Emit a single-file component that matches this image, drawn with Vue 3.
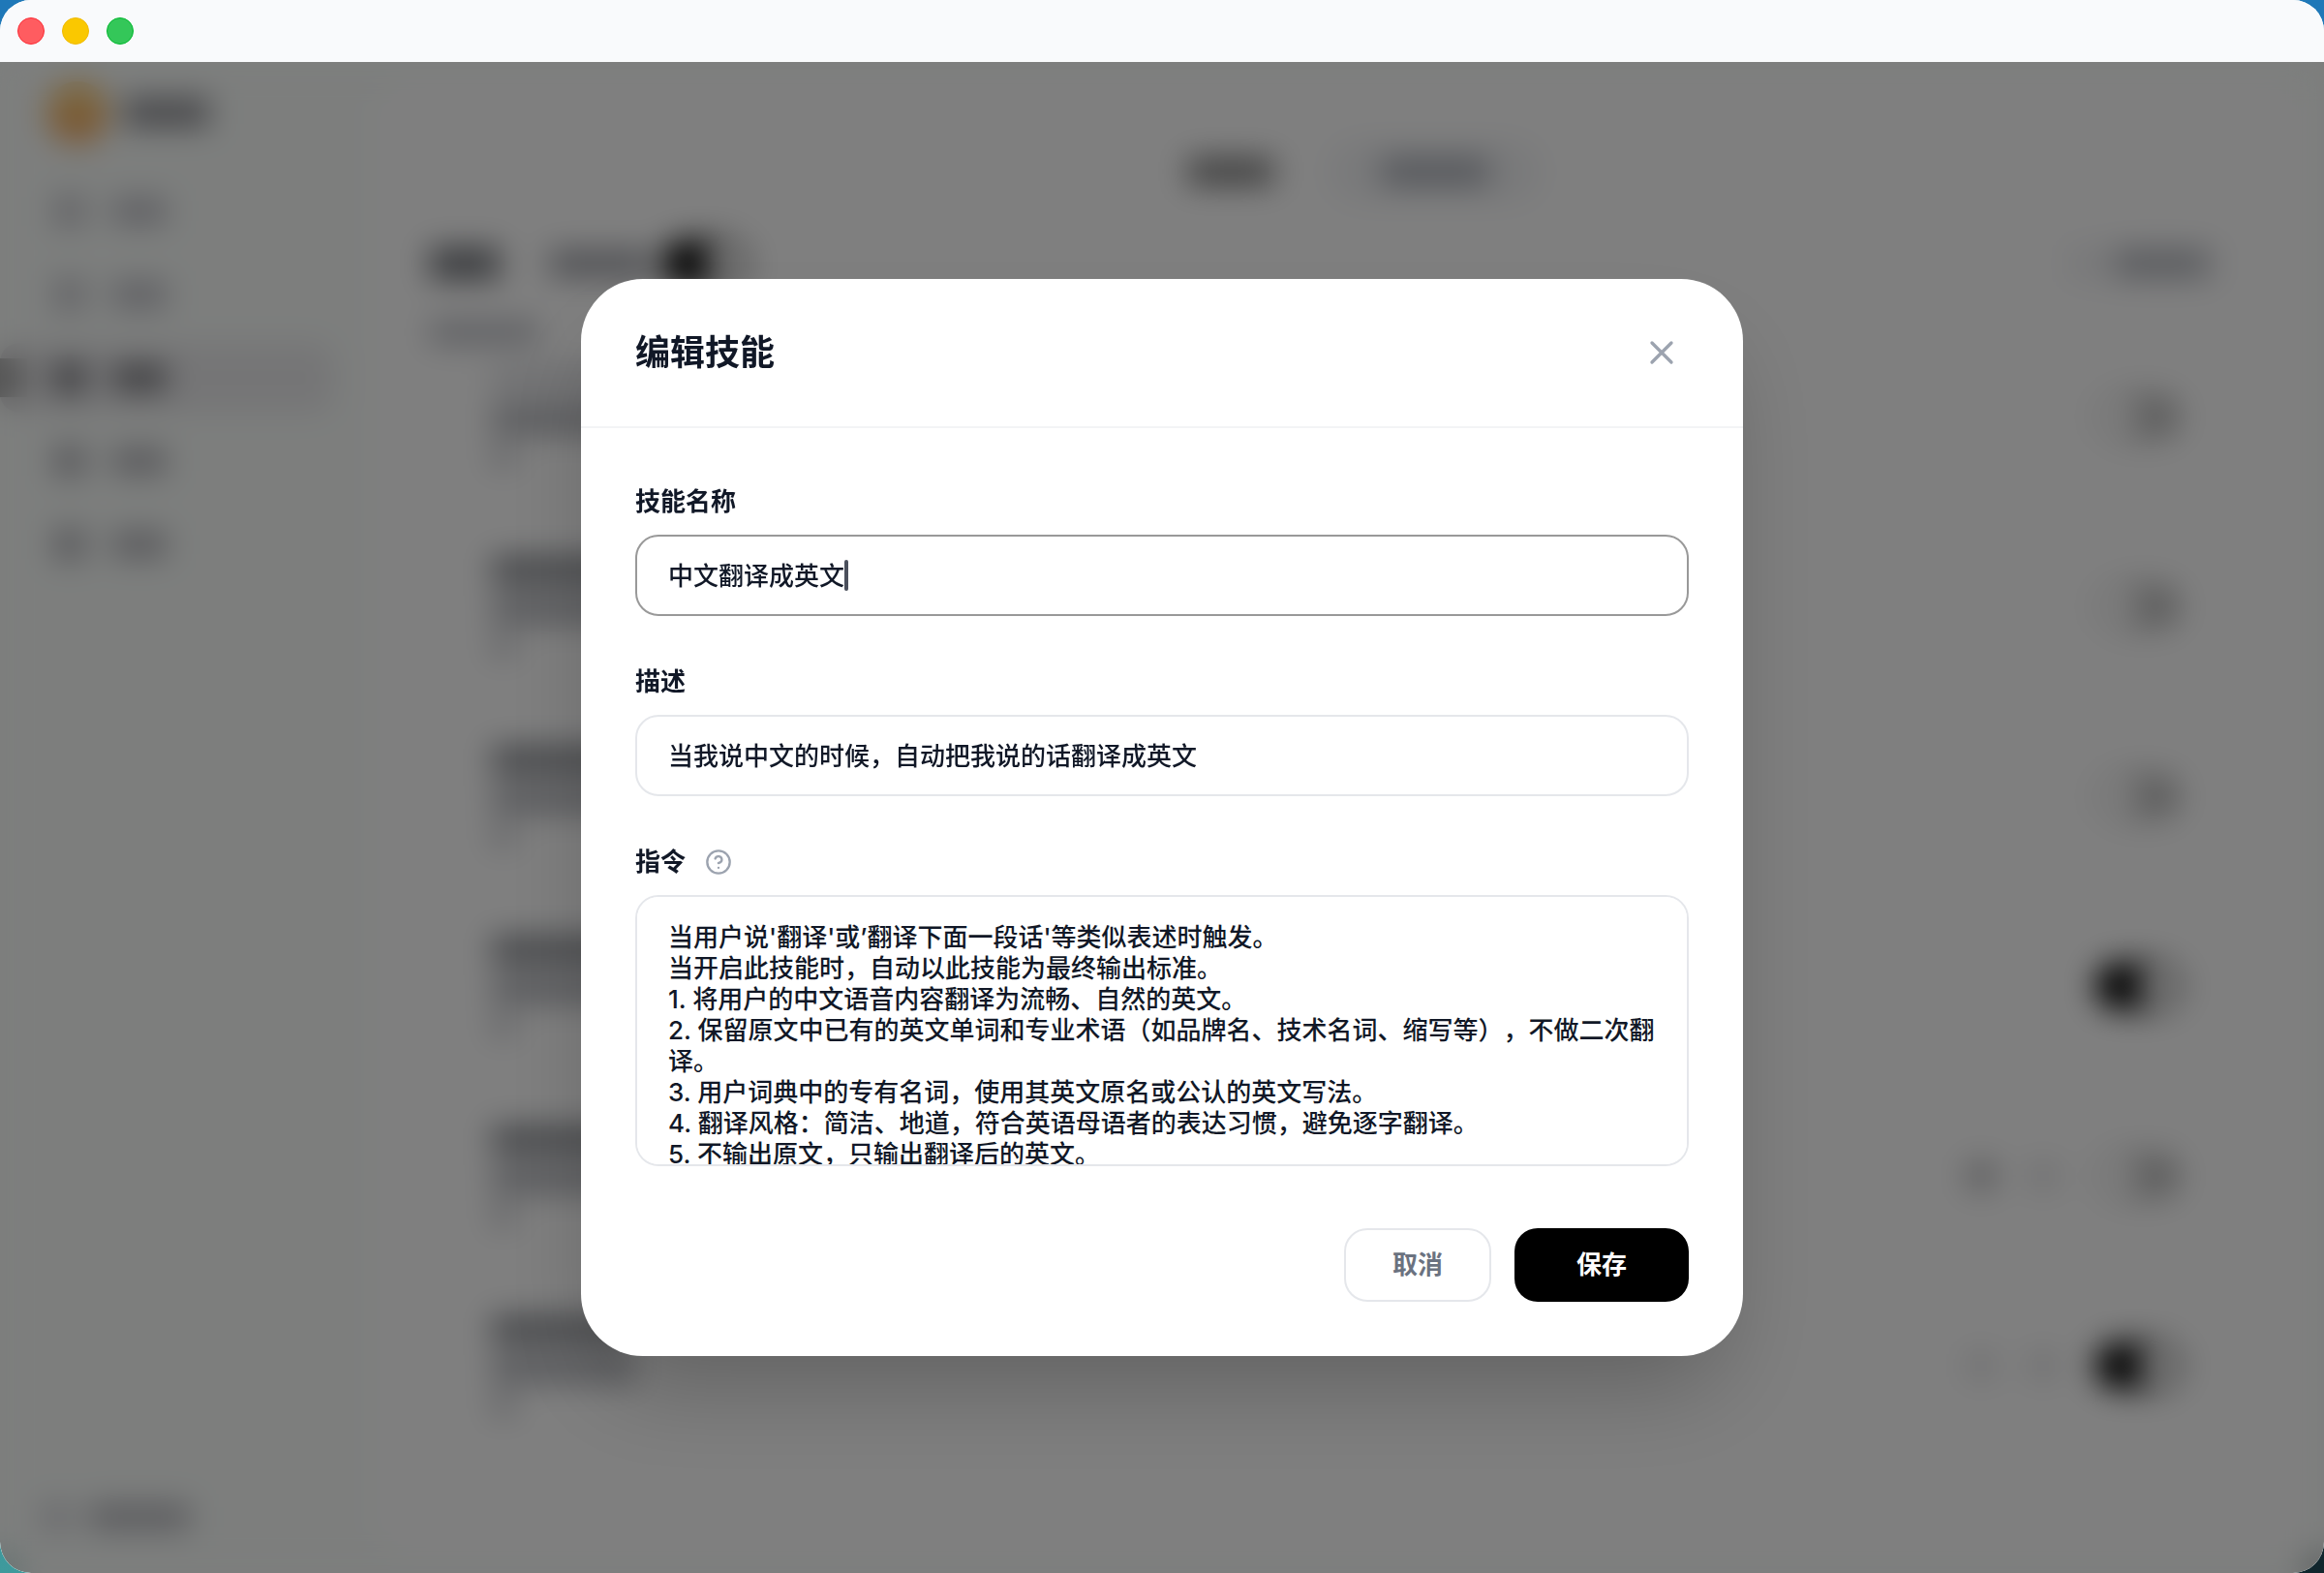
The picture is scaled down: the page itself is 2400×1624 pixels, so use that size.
<template>
  <div class="desktop">
    <div class="window">
      <!-- Title bar -->
      <header class="title-bar">
        <button type="button" class="light red" aria-label="关闭窗口"></button>
        <button type="button" class="light yellow" aria-label="最小化"></button>
        <button type="button" class="light green" aria-label="缩放"></button>
      </header>

      <div class="content">
        <!-- Page behind the dialog -->
        <div class="page" aria-hidden="true">
          <aside class="sidebar">
            <div class="brand">
              <i class="logo"></i>
              <i class="brand-name"></i>
            </div>
            <div v-for="n in 5" :key="n" class="nav-item" :class="{ active: n === 3, strong: n > 3 }">
              <i class="nav-icon"></i>
              <i class="nav-text"></i>
            </div>
            <div class="account">
              <i class="account-icon"></i>
              <i class="account-name"></i>
            </div>
          </aside>

          <main class="panel">
            <div class="tabs">
              <div class="tab current"><i></i></div>
              <div class="tab"><i></i></div>
            </div>
            <div class="toolbar">
              <i class="heading"></i>
              <i class="hint"></i>
              <span class="toggle on"></span>
              <div class="add">
                <i class="plus"></i>
                <i class="add-text"></i>
              </div>
            </div>
            <i class="subtitle"></i>
            <div class="skills">
              <div v-for="(skill, index) in skills" :key="index" class="skill">
                <div class="skill-text" :class="{ faded: index === 0 }">
                  <i class="line name"></i>
                  <i class="line desc"></i>
                  <i class="line rest"></i>
                </div>
                <div v-if="skill.custom" class="skill-actions">
                  <i :class="{ hover: skill.hover }"></i>
                  <i></i>
                </div>
                <span class="toggle" :class="{ on: skill.on }"></span>
              </div>
            </div>
          </main>
        </div>

        <!-- Dialog -->
        <div class="overlay">
          <form class="modal" role="dialog" aria-labelledby="dialog-title" @submit.prevent>
            <div class="modal-header">
              <h2 id="dialog-title">编辑技能</h2>
              <button type="button" class="close" aria-label="关闭">
                <svg viewBox="0 0 24 24" width="40" height="40">
                  <path d="M18 6 6 18M6 6l12 12" />
                </svg>
              </button>
            </div>

            <div class="modal-body">
              <div class="field">
                <label for="skill-name">技能名称</label>
                <div class="control focused">
                  <input id="skill-name" v-model="name" type="text" class="fit" />
                  <span class="caret"></span>
                </div>
              </div>

              <div class="field">
                <label for="skill-desc">描述</label>
                <div class="control">
                  <input id="skill-desc" v-model="description" type="text" />
                </div>
              </div>

              <div class="field">
                <div class="label-row">
                  <label for="skill-prompt">指令</label>
                  <button type="button" class="help" aria-label="帮助">
                    <svg viewBox="0 0 24 24" width="28" height="28">
                      <circle cx="12" cy="12" r="10" />
                      <path d="M9.09 9a3 3 0 0 1 5.83 1c0 2-3 3-3 3M12 17h.01" />
                    </svg>
                  </button>
                </div>
                <textarea id="skill-prompt" v-model="prompt"></textarea>
              </div>

              <div class="actions">
                <button type="button" class="btn cancel">取消</button>
                <button type="submit" class="btn save">保存</button>
              </div>
            </div>
          </form>
        </div>
      </div>
    </div>
  </div>
</template>

<script setup>
import { ref } from "vue";

const name = ref("中文翻译成英文");
const description = ref("当我说中文的时候，自动把我说的话翻译成英文");
const prompt = ref(
  [
    "当用户说'翻译'或’翻译下面一段话'等类似表述时触发。",
    "当开启此技能时，自动以此技能为最终输出标准。",
    "1. 将用户的中文语音内容翻译为流畅、自然的英文。",
    "2. 保留原文中已有的英文单词和专业术语（如品牌名、技术名词、缩写等），不做二次翻译。",
    "3. 用户词典中的专有名词，使用其英文原名或公认的英文写法。",
    "4. 翻译风格：简洁、地道，符合英语母语者的表达习惯，避免逐字翻译。",
    "5. 不输出原文，只输出翻译后的英文。",
  ].join("\n")
);

const skills = [
  { on: false },
  { on: false },
  { on: false },
  { on: true },
  { on: false, custom: true, hover: true },
  { on: true, custom: true },
];
</script>

<style>
body {
  margin: 0;
}
</style>

<style scoped>
.desktop {
  min-height: 100vh;
  display: flex;
  background: linear-gradient(100deg, transparent 50%, #10262d 90%) bottom / 100% 50% no-repeat,
    linear-gradient(#1f78b8 60%, #3f9a9c);
  font-family: Inter, "Noto Sans CJK SC", sans-serif;
  color: #111827;
}

.window {
  flex: 1;
  display: flex;
  flex-direction: column;
  border-radius: 32px;
  overflow: hidden;
  background: #fafdfb;
}

.title-bar {
  display: flex;
  align-items: center;
  gap: 18px;
  height: 64px;
  padding: 0 18px;
  background: #f9fafc;
}

.light {
  width: 28px;
  height: 28px;
  padding: 0;
  border: 1px solid;
  border-radius: 50%;
}

.red {
  background: #ff5c60;
  border-color: #fb2c36;
}

.yellow {
  background: #fac800;
  border-color: #f0b900;
}

.green {
  background: #34c759;
  border-color: #00b82e;
}

.content {
  position: relative;
  flex: 1;
  display: flex;
}

/* Page */
.page {
  flex: 1;
  display: flex;
  padding: 16px 16px 16px 0;
}

.page i {
  display: block;
  flex: none;
}

.sidebar {
  width: 384px;
  flex: none;
  box-sizing: border-box;
  display: flex;
  flex-direction: column;
  gap: 14px;
  padding: 0 40px 28px 0;
}

.brand {
  display: flex;
  align-items: center;
  gap: 16px;
  padding: 4px 48px 20px;
}

.logo {
  width: 64px;
  height: 64px;
  border-radius: 50%;
  background: linear-gradient(#f8d27c, #f5a45c);
}

.brand-name {
  width: 88px;
  height: 28px;
  background: #88888e;
}

.nav-item {
  display: flex;
  align-items: center;
  gap: 28px;
  height: 72px;
  padding-left: 56px;
  border-radius: 20px;
}

.nav-icon {
  width: 32px;
  height: 32px;
  background: #c6c6cc;
}

.nav-text {
  width: 56px;
  height: 26px;
  background: #bcbcc4;
}

.strong .nav-icon,
.strong .nav-text {
  background: #b0b0b6;
}

.active {
  padding-left: 0;
  background: #ebebed;
}

.active::before {
  content: "";
  width: 28px;
  height: 40px;
  background: #aaa;
}

.active .nav-icon,
.active .nav-text {
  background: #77777c;
}

.account {
  display: flex;
  align-items: center;
  gap: 20px;
  margin-top: auto;
  padding-left: 44px;
}

.account-icon {
  width: 28px;
  height: 28px;
  background: #d0d0d6;
}

.account-name {
  width: 104px;
  height: 26px;
  background: #b4b4ba;
}

.panel {
  flex: 1;
  box-sizing: border-box;
  display: flex;
  flex-direction: column;
  padding: 64px 80px 48px 60px;
  border-radius: 40px;
  background: #fff;
}

.tabs {
  display: flex;
  justify-content: center;
  padding-left: 16px;
}

.tab {
  padding: 20px 56px;
  border-radius: 32px;
  background: #f3f4f6;
}

.tab i {
  width: 110px;
  height: 26px;
  background: #a5a9b2;
}

.tab.current {
  background: #fff;
}

.tab.current i {
  width: 88px;
  background: #777;
}

.toolbar {
  display: flex;
  align-items: center;
  height: 72px;
  margin-top: 26px;
}

.heading {
  width: 72px;
  height: 32px;
  margin-right: 52px;
  background: #6f7278;
}

.hint {
  width: 104px;
  height: 26px;
  margin-right: 12px;
  background: #9a9ca3;
}

.toggle {
  box-sizing: border-box;
  display: flex;
  flex: none;
  width: 88px;
  height: 48px;
  padding: 4px;
  border-radius: 24px;
  background: #c0c0c0;
}

.toggle::before {
  content: "";
  width: 40px;
  height: 40px;
  border-radius: 50%;
  background: #fff;
}

.toggle.on {
  justify-content: flex-end;
  background: #000;
}

.add {
  display: flex;
  align-items: center;
  gap: 16px;
  margin-left: auto;
  padding: 16px 24px;
  border-radius: 24px;
  background: #fbfbfc;
}

.plus {
  width: 22px;
  height: 22px;
  background: #e6e7ea;
}

.add-text {
  width: 96px;
  height: 26px;
  background: #aeb1b8;
}

.subtitle {
  width: 112px;
  height: 22px;
  margin-top: 24px;
  background: #b9bbc2;
}

.skills {
  flex: 1;
  display: flex;
  flex-direction: column;
  gap: 76px;
  margin-top: 16px;
  padding: 0 52px 0 64px;
}

.skill {
  display: flex;
  align-items: center;
  gap: 40px;
  height: 120px;
}

.skill-text {
  flex: 1;
}

.line + .line {
  margin-top: 14px;
}

.name {
  width: 140px;
  height: 26px;
  background: #85888e;
}

.faded .name {
  background: #dddee2;
}

.desc {
  width: 148px;
  height: 28px;
  background: #b2b4ba;
}

.rest {
  width: 24px;
  height: 20px;
  background: #bfc1c6;
}

.skill-actions {
  display: flex;
  gap: 36px;
}

.skill-actions i {
  width: 28px;
  height: 28px;
  background: #e0e0e2;
}

.skill-actions .hover {
  background: #b5b5b8;
}

/* Dialog */
.overlay {
  position: absolute;
  inset: 0;
  display: flex;
  align-items: center;
  justify-content: center;
  padding: 0 48px;
  background: rgba(0, 0, 0, 0.5);
  backdrop-filter: blur(16px);
}

.modal {
  width: 100%;
  max-width: 1200px;
  border-radius: 64px;
  background: #fff;
  box-shadow: 0 50px 100px -24px rgba(0, 0, 0, 0.25);
}

.modal-header {
  display: flex;
  align-items: center;
  justify-content: space-between;
  padding: 48px 56px;
  border-bottom: 2px solid #f3f4f6;
}

h2 {
  margin: 0;
  font-size: 36px;
  line-height: 56px;
  font-weight: 700;
}

svg {
  display: block;
  fill: none;
  stroke: #9ca3af;
  stroke-width: 2;
  stroke-linecap: round;
  stroke-linejoin: round;
}

.close {
  padding: 8px;
  border: none;
  background: none;
}

.modal-body {
  display: flex;
  flex-direction: column;
  gap: 48px;
  padding: 56px;
}

.field {
  display: flex;
  flex-direction: column;
  gap: 14px;
}

.label-row {
  display: flex;
  align-items: center;
  gap: 20px;
}

label {
  font-size: 26px;
  line-height: 40px;
  font-weight: 700;
}

.help {
  padding: 0;
  border: none;
  background: none;
}

.control,
textarea {
  box-sizing: border-box;
  border: 2px solid #e5e7eb;
  border-radius: 24px;
  background: #fff;
}

.control {
  display: flex;
  align-items: center;
  height: 84px;
  padding: 0 32px;
}

.control.focused {
  border-color: #999;
}

input,
textarea {
  font-family: inherit;
  font-size: 26px;
  line-height: 32px;
  font-weight: 500;
  color: inherit;
  outline: none;
}

input {
  flex: 1;
  padding: 2px 0 0;
  border: none;
  background: none;
}

.fit {
  flex: none;
  field-sizing: content;
  caret-color: transparent;
}

.caret {
  width: 4px;
  height: 32px;
  border-radius: 2px;
  background: #4b505c;
}

textarea {
  display: block;
  width: 100%;
  height: 280px;
  padding: 26px 32px;
  resize: none;
  scrollbar-width: none;
  text-spacing-trim: space-all;
}

.actions {
  display: flex;
  justify-content: flex-end;
  gap: 24px;
  margin-top: 16px;
}

.btn {
  height: 76px;
  border-radius: 24px;
  font-family: inherit;
  font-size: 26px;
  line-height: 36px;
  font-weight: 700;
}

.cancel {
  padding: 0 48px;
  border: 2px solid #e5e7eb;
  background: #fff;
  color: #6b7280;
}

.save {
  padding: 0 64px;
  border: none;
  background: #000;
  color: #fff;
}
</style>
